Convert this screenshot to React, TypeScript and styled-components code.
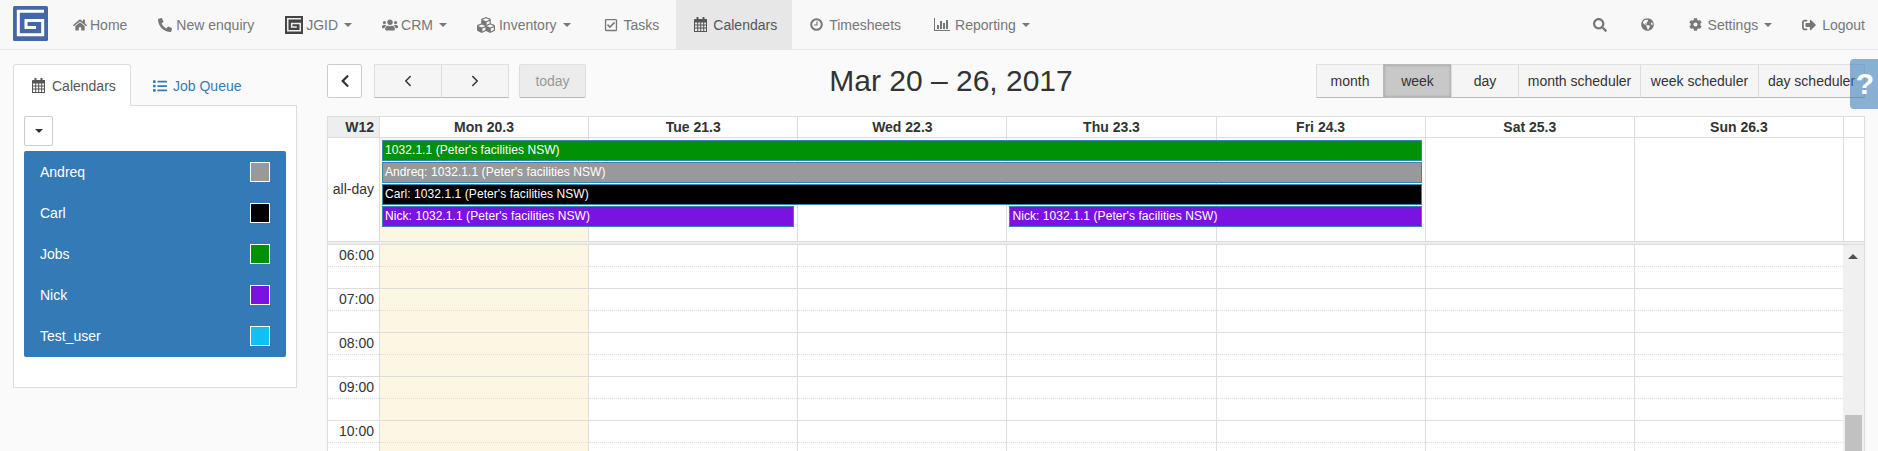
import React from "react";
import styled, { createGlobalStyle } from "styled-components";
import {
  FaHome, FaPhone, FaUsers, FaCubes, FaRegCheckSquare, FaSearch, FaGlobeAmericas, FaCog, FaSignOutAlt, FaList, FaChevronLeft,
} from "react-icons/fa";
import { ChevronLeft, ChevronRight } from "lucide-react";

const Global = createGlobalStyle`
  html, body { margin: 0; padding: 0; height: 451px; overflow: hidden; background: #fafafa; }
  body { font-family: "Liberation Sans", Arial, sans-serif; font-size: 14px; color: #333; }
  * { box-sizing: border-box; }
`;

const Page = styled.div`
  position: relative;
  height: 451px;
  overflow: hidden;
  display: flex;
  flex-direction: column;
`;

const Navbar = styled.nav`
  flex: none;
  height: 50px;
  display: flex;
  align-items: stretch;
  padding-left: 13px;
  background: #f8f8f8;
  border-bottom: 1px solid #e7e7e7;
`;
const LogoBox = styled.div`
  width: 35px;
  height: 35px;
  margin: 6px 10px 0 0;
  flex: none;
  line-height: 0;
`;
const NavRight = styled.div`
  display: flex;
  margin-left: auto;
  margin-right: -2px;
`;
const NavItem = styled.a<{ $active?: boolean; $extra?: number }>`
  display: flex;
  align-items: center;
  padding: 0 ${(p) => 15 + (p.$extra ?? 0)}px 0 15px;
  color: ${(p) => (p.$active ? "#555" : "#777")};
  background: ${(p) => (p.$active ? "#e7e7e7" : "transparent")};
  white-space: nowrap;
`;
const IconSlot = styled.span<{ $w: number; $pad?: number }>`
  display: inline-flex;
  align-items: center;
  flex: none;
  width: ${(p) => p.$w}px;
  padding-left: ${(p) => p.$pad ?? 0}px;
`;
const Caret = styled.span`
  display: inline-block;
  margin-left: 6px;
  border-top: 4px solid currentColor;
  border-left: 4px solid transparent;
  border-right: 4px solid transparent;
`;

const Main = styled.div`
  flex: 1;
  min-height: 0;
  display: flex;
  padding: 14px 13px 0 13px;
`;
const Sidebar = styled.aside`
  flex: none;
  width: 284px;
  margin-right: 30px;
`;
const TabRow = styled.div`
  display: flex;
  height: 42px;
  margin-bottom: -1px;
  position: relative;
`;
const Tab = styled.div<{ $active?: boolean }>`
  display: flex;
  align-items: center;
  height: 42px;
  padding: ${(p) => (p.$active ? "0 15px 0 18px" : "0 15px 0 19px")};
  margin-right: 2px;
  width: ${(p) => (p.$active ? "118px" : "auto")};
  color: ${(p) => (p.$active ? "#555" : "#337ab7")};
  background: ${(p) => (p.$active ? "#fff" : "transparent")};
  border: 1px solid ${(p) => (p.$active ? "#ddd" : "transparent")};
  border-bottom: none;
  border-radius: 3px 3px 0 0;
  white-space: nowrap;
`;
const Panel = styled.div`
  height: 283px;
  padding: 10px;
  background: #fff;
  border: 1px solid #ddd;
`;
const DropButton = styled.div`
  width: 29px;
  height: 30px;
  margin-bottom: 5px;
  display: flex;
  align-items: center;
  justify-content: center;
  color: #333;
  border: 1px solid #ccc;
  border-radius: 2px;
  background: #fff;
  ${Caret} { margin-left: 0; }
`;
const ResourceList = styled.div`
  background: #337ab7;
  border-radius: 2px;
  padding: 0 16px;
  height: 206px;
`;
const ResourceRow = styled.div`
  height: 41px;
  display: flex;
  align-items: center;
  justify-content: space-between;
  color: #fff;
`;
const Swatch = styled.span<{ $color: string }>`
  width: 20px;
  height: 20px;
  background: ${(p) => p.$color};
  border: 1px solid #fff;
`;

const Content = styled.section`
  flex: none;
  width: 1538px;
  display: flex;
  flex-direction: column;
  min-height: 0;
`;
const Toolbar = styled.div`
  flex: none;
  height: 34px;
  margin-bottom: 18px;
  display: flex;
  justify-content: space-between;
  align-items: flex-start;
`;
const ToolGroup = styled.div`
  display: flex;
`;
const Title = styled.h2`
  margin: 0;
  font-size: 30px;
  font-weight: 400;
  line-height: 34px;
  color: #333;
`;
const ToolButton = styled.div<{ $w: number; $on?: boolean; $off?: boolean; $white?: boolean; $gap?: number }>`
  width: ${(p) => p.$w}px;
  height: 34px;
  margin-right: ${(p) => p.$gap ?? 0}px;
  display: flex;
  align-items: center;
  justify-content: center;
  color: ${(p) => (p.$off ? "#999" : "#333")};
  white-space: nowrap;
  background: ${(p) => (p.$on ? "#c8c8c8" : p.$off ? "#ececec" : p.$white ? "#fff" : "#f5f5f5")};
  border: 1px solid #ddd;
  border-color: ${(p) => (p.$on ? "#b8b8b8" : p.$white ? "#ccc" : "#e0e0e0 #ddd #b8b8b8 #ddd")};
  border-right-width: ${(p) => (p.$gap !== undefined || p.$white ? 1 : 0)}px;
  border-radius: ${(p) => (p.$white || p.$off ? "2px" : "0")};
  box-shadow: ${(p) => (p.$on ? "inset 0 0 3px rgba(0,0,0,.25)" : "none")};
  &:last-child { border-right-width: 1px; }
`;

const GRID = "51px repeat(7, 1fr) 21px";
const Calendar = styled.div`
  flex: 1;
  min-height: 0;
  display: flex;
  flex-direction: column;
  background: #fff;
  border: 1px solid #ddd;
  border-bottom: none;
  overflow: hidden;
`;
const HeadRow = styled.div`
  flex: none;
  display: grid;
  grid-template-columns: ${GRID};
  height: 21px;
  border-bottom: 1px solid #ddd;
`;
const HeadCell = styled.div<{ $week?: boolean }>`
  font-weight: 700;
  line-height: 20px;
  text-align: ${(p) => (p.$week ? "right" : "center")};
  padding-right: ${(p) => (p.$week ? "5px" : "0")};
  background: ${(p) => (p.$week ? "#eee" : "transparent")};
  border-left: ${(p) => (p.$week ? "none" : "1px solid #ddd")};
`;
const AllDay = styled.div`
  flex: none;
  height: 104px;
  display: grid;
  grid-template-columns: ${GRID};
  grid-template-rows: 2px repeat(4, 22px) 1fr;
  border-bottom: 1px solid #ddd;
`;
const AllDayLabel = styled.div`
  grid-column: 1;
  grid-row: 1 / -1;
  display: flex;
  align-items: center;
  justify-content: flex-end;
  padding: 0 5px 2px 0;
`;
const AllDayCell = styled.div<{ $col: number; $today?: boolean }>`
  grid-column: ${(p) => p.$col};
  grid-row: 1 / -1;
  border-left: 1px solid #ddd;
  background: ${(p) => (p.$today ? "#fcf7e2" : "transparent")};
`;
const EventBar = styled.div<{ $from: number; $to: number; $row: number; $color: string }>`
  grid-column: ${(p) => p.$from} / ${(p) => p.$to};
  grid-row: ${(p) => p.$row + 1};
  z-index: 1;
  height: 21px;
  margin: 0 3px;
  padding: 0 2px;
  font-size: 12px;
  letter-spacing: 0.07px;
  line-height: 19px;
  color: #fff;
  white-space: nowrap;
  overflow: hidden;
  background: ${(p) => p.$color};
  border: 1px solid #3a87ad;
`;
const Divider = styled.div`
  flex: none;
  height: 3px;
  background: #eee;
  border-bottom: 1px solid #ddd;
`;
const TimeGrid = styled.div`
  flex: 1;
  min-height: 0;
  overflow: hidden;
  display: grid;
  grid-template-columns: ${GRID};
`;
const TimeColumn = styled.div<{ $today?: boolean; $axis?: boolean }>`
  border-left: ${(p) => (p.$axis ? "none" : "1px solid #ddd")};
  background: ${(p) => (p.$today ? "#fcf7e2" : "transparent")};
`;
const Slot = styled.div<{ $half?: boolean }>`
  height: 22px;
  padding-right: 5px;
  text-align: right;
  line-height: 21px;
  border-bottom: 1px ${(p) => (p.$half ? "dotted" : "solid")} #ddd;
`;
const ScrollTrack = styled.div`
  background: #f0f0f0;
  display: flex;
  flex-direction: column;
  align-items: center;
`;
const ScrollArrow = styled.span`
  margin-top: 9px;
  border-bottom: 5px solid #505050;
  border-left: 5px solid transparent;
  border-right: 5px solid transparent;
`;
const ScrollThumb = styled.div`
  margin-top: 156px;
  width: 17px;
  height: 60px;
  flex: none;
  background: #c1c1c1;
`;
const HelpTab = styled.div`
  position: absolute;
  top: 59px;
  right: 0;
  width: 28px;
  height: 50px;
  display: flex;
  align-items: center;
  justify-content: center;
  padding-left: 2px;
  font-size: 30px;
  font-weight: 700;
  color: #fff;
  background: rgba(51, 122, 183, 0.58);
  border-radius: 4px 0 0 4px;
`;

const Logo = ({ size, bg, fg, sw }: { size: number; bg: string; fg: string; sw: number }) => (
  <svg width={size} height={size} viewBox="0 0 35 35">
    <rect width="35" height="35" rx={size > 20 ? 1.5 : 0} fill={bg} />
    <path d="M31 5.300H5.300V28.700H29.700V14.500H13V21.500H23" fill="none" stroke={fg} strokeWidth={sw} />
  </svg>
);
const CalendarGlyph = () => (
  <svg width="13" height="15" viewBox="0 0 13 15" fill="currentColor">
    <rect x="2.500" y="0" width="2" height="3.500" rx=".6" />
    <rect x="8.500" y="0" width="2" height="3.500" rx=".6" />
    <path d="M1 2h12v13H0V3a1 1 0 0 1 1-1z M1 5.500v2h2.200v-2z M4.200 5.500v2h2v-2z M7.200 5.500v2h2v-2z M10.200 5.500v2H12v-2z M1 8.500v2h2.200v-2z M4.200 8.500v2h2v-2z M7.200 8.500v2h2v-2z M10.200 8.500v2H12v-2z M1 11.500V14h2.200v-2.500z M4.200 11.500V14h2v-2.500z M7.200 11.500V14h2v-2.500z M10.200 11.500V14H12v-2.500z" fillRule="evenodd" />
  </svg>
);
const ClockGlyph = () => (
  <svg width="13" height="13" viewBox="0 0 13 13" fill="none" stroke="currentColor">
    <circle cx="6.500" cy="6.500" r="5.300" strokeWidth="2" />
    <path d="M7 3.500V7H4" strokeWidth="1.200" />
  </svg>
);
const BarsGlyph = () => (
  <svg width="16" height="13" viewBox="0 0 16 13" fill="currentColor">
    <path d="M0 0h1v12h15v1H0z" />
    <rect x="3" y="7" width="2" height="4" />
    <rect x="6" y="3" width="2" height="8" />
    <rect x="9" y="5" width="2" height="6" />
    <rect x="12" y="2" width="2" height="9" />
  </svg>
);

const resources = [
  { name: "Andreq", color: "#999999" },
  { name: "Carl", color: "#000000" },
  { name: "Jobs", color: "#009107" },
  { name: "Nick", color: "#7a13e2" },
  { name: "Test_user", color: "#10c0f5" },
];
const days = ["Mon 20.3", "Tue 21.3", "Wed 22.3", "Thu 23.3", "Fri 24.3", "Sat 25.3", "Sun 26.3"];
const views = [
  { label: "month", w: 67 },
  { label: "week", w: 68, on: true },
  { label: "day", w: 67 },
  { label: "month scheduler", w: 122 },
  { label: "week scheduler", w: 118 },
  { label: "day scheduler", w: 107 },
];
const text = "1032.1.1 (Peter's facilities NSW)";
const events = [
  { from: 2, to: 7, row: 1, color: "#009107", label: text },
  { from: 2, to: 7, row: 2, color: "#999999", label: `Andreq: ${text}` },
  { from: 2, to: 7, row: 3, color: "#000000", label: `Carl: ${text}` },
  { from: 2, to: 4, row: 4, color: "#7a13e2", label: `Nick: ${text}` },
  { from: 5, to: 7, row: 4, color: "#7a13e2", label: `Nick: ${text}` },
];
const hours = ["06:00", "07:00", "08:00", "09:00", "10:00"];

const Slots = ({ labels }: { labels?: boolean }) => (
  <>
    {hours.map((h) => (
      <React.Fragment key={h}>
        <Slot $half>{labels ? h : null}</Slot>
        <Slot />
      </React.Fragment>
    ))}
  </>
);

export default function App() {
  return (
    <Page>
      <Global />
      <Navbar>
        <LogoBox><Logo size={35} bg="#4468a5" fg="#fff" sw={3} /></LogoBox>
        <NavItem $extra={1}><IconSlot $w={17}><FaHome size={14} /></IconSlot>Home</NavItem>
        <NavItem $extra={1}><IconSlot $w={18}><FaPhone size={14} style={{ transform: "scaleX(-1)" }} /></IconSlot>New enquiry</NavItem>
        <NavItem><IconSlot $w={21}><Logo size={18} bg="#444" fg="#eee" sw={3} /></IconSlot>JGID<Caret /></NavItem>
        <NavItem><IconSlot $w={19}><FaUsers size={16} /></IconSlot>CRM<Caret /></NavItem>
        <NavItem><IconSlot $w={22}><FaCubes size={18} /></IconSlot>Inventory<Caret /></NavItem>
        <NavItem $extra={2}><IconSlot $w={23} $pad={3}><FaRegCheckSquare size={14} /></IconSlot>Tasks</NavItem>
        <NavItem $active><IconSlot $w={22} $pad={3}><CalendarGlyph /></IconSlot>Calendars</NavItem>
        <NavItem $extra={3}><IconSlot $w={22} $pad={3}><ClockGlyph /></IconSlot>Timesheets</NavItem>
        <NavItem><IconSlot $w={21}><BarsGlyph /></IconSlot>Reporting<Caret /></NavItem>
        <NavRight>
          <NavItem><IconSlot $w={18}><FaSearch size={14} /></IconSlot></NavItem>
          <NavItem><IconSlot $w={18}><FaGlobeAmericas size={13} /></IconSlot></NavItem>
          <NavItem><IconSlot $w={19}><FaCog size={13} /></IconSlot>Settings<Caret /></NavItem>
          <NavItem><IconSlot $w={20}><FaSignOutAlt size={14} /></IconSlot>Logout</NavItem>
        </NavRight>
      </Navbar>

      <Main>
        <Sidebar>
          <TabRow>
            <Tab $active><IconSlot $w={20}><CalendarGlyph /></IconSlot>Calendars</Tab>
            <Tab><IconSlot $w={20}><FaList size={14} /></IconSlot>Job Queue</Tab>
          </TabRow>
          <Panel>
            <DropButton><Caret /></DropButton>
            <ResourceList>
              {resources.map((r) => (
                <ResourceRow key={r.name}>
                  {r.name}
                  <Swatch $color={r.color} />
                </ResourceRow>
              ))}
            </ResourceList>
          </Panel>
        </Sidebar>

        <Content>
          <Toolbar>
            <ToolGroup>
              <ToolButton $w={35} $white $gap={12}><FaChevronLeft size={14} /></ToolButton>
              <ToolButton $w={67}><ChevronLeft size={18} strokeWidth={2} /></ToolButton>
              <ToolButton $w={68} $gap={10}><ChevronRight size={18} strokeWidth={2} /></ToolButton>
              <ToolButton $w={67} $off $gap={0}>today</ToolButton>
            </ToolGroup>
            <Title>Mar 20 – 26, 2017</Title>
            <ToolGroup>
              {views.map((v) => (
                <ToolButton key={v.label} $w={v.w} $on={v.on}>{v.label}</ToolButton>
              ))}
            </ToolGroup>
          </Toolbar>

          <Calendar>
            <HeadRow>
              <HeadCell $week>W12</HeadCell>
              {days.map((d) => <HeadCell key={d}>{d}</HeadCell>)}
              <HeadCell />
            </HeadRow>
            <AllDay>
              <AllDayLabel>all-day</AllDayLabel>
              {[2, 3, 4, 5, 6, 7, 8, 9].map((c) => (
                <AllDayCell key={c} $col={c} $today={c === 2} />
              ))}
              {events.map((e) => (
                <EventBar key={`${e.from}-${e.row}`} $from={e.from} $to={e.to} $row={e.row} $color={e.color}>
                  {e.label}
                </EventBar>
              ))}
            </AllDay>
            <Divider />
            <TimeGrid>
              <TimeColumn $axis><Slots labels /></TimeColumn>
              {days.map((d, i) => (
                <TimeColumn key={d} $today={i === 0}><Slots /></TimeColumn>
              ))}
              <ScrollTrack>
                <ScrollArrow />
                <ScrollThumb />
              </ScrollTrack>
            </TimeGrid>
          </Calendar>
        </Content>
      </Main>
      <HelpTab>?</HelpTab>
    </Page>
  );
}
